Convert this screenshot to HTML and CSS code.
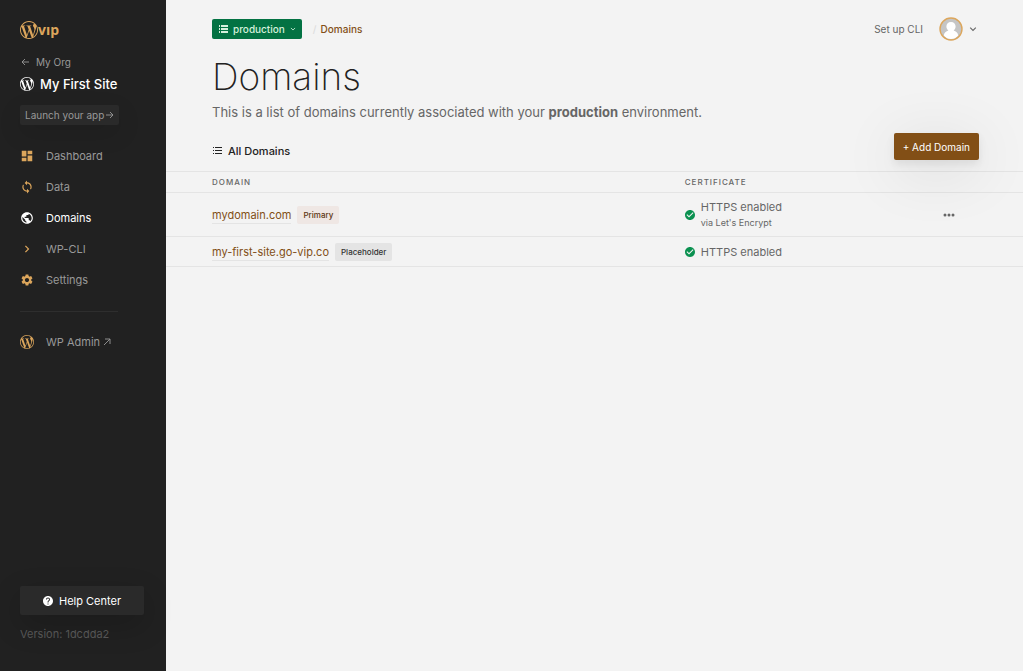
FILE: index.html
```html
<!DOCTYPE html>
<html lang="en">
<head>
    <meta charset="UTF-8">
    <meta name="viewport" content="width=device-width, initial-scale=1.0">
    <title>Domains - My First Site</title>
    <link rel="stylesheet" href="styles.css">
</head>
<body>

    <!-- Shared icon shapes -->
    <svg class="sprite" aria-hidden="true">
        <symbol id="icon-wordpress" viewBox="0 0 24 24">
            <path d="M21.469 6.825c.84 1.537 1.318 3.3 1.318 5.175 0 3.979-2.156 7.456-5.363 9.325l3.295-9.527c.615-1.54.82-2.771.82-3.864 0-.405-.026-.78-.07-1.11m-7.981.105c.647-.03 1.232-.105 1.232-.105.582-.075.514-.93-.067-.899 0 0-1.755.135-2.88.135-1.064 0-2.85-.15-2.85-.15-.585-.03-.661.855-.075.885 0 0 .54.061 1.125.09l1.68 4.605-2.37 7.08L5.354 6.9c.649-.03 1.234-.1 1.234-.1.585-.075.516-.93-.065-.896 0 0-1.746.138-2.874.138-.2 0-.438-.008-.69-.015C4.911 3.15 8.235 1.215 12 1.215c2.809 0 5.365 1.072 7.286 2.833-.046-.003-.091-.009-.141-.009-1.06 0-1.812.923-1.812 1.914 0 .89.513 1.643 1.06 2.531.411.72.89 1.643.89 2.977 0 .915-.354 1.994-.821 3.479l-1.075 3.585-3.9-11.61.001.014zM12 22.784c-1.059 0-2.081-.153-3.048-.437l3.237-9.406 3.315 9.087c.024.053.05.101.078.149-1.12.393-2.325.609-3.582.609M1.211 12c0-1.564.336-3.05.935-4.39L7.29 21.709C3.694 19.96 1.212 16.271 1.211 12M12 0C5.385 0 0 5.385 0 12s5.385 12 12 12 12-5.385 12-12S18.615 0 12 0"/>
        </symbol>
        <symbol id="icon-check" viewBox="2 2 20 20">
            <path d="M12 2C6.48 2 2 6.48 2 12s4.48 10 10 10 10-4.48 10-10S17.52 2 12 2zm-2 15l-5-5 1.41-1.41L10 14.17l7.59-7.59L19 8l-9 9z"/>
        </symbol>
        <symbol id="icon-chevron" viewBox="0 0 8 8">
            <path d="M1.2 2.6L4 5.4l2.800-2.800" fill="none" stroke="currentColor" stroke-width="1.1"/>
        </symbol>
    </svg>

    <div class="layout">
        <aside class="sidebar">
            <a class="logo" href="#" aria-label="WordPress VIP">
                <svg class="icon-large"><use href="#icon-wordpress"/></svg>
                <span>vıp</span>
            </a>

            <a class="org-link" href="#">
                <svg class="icon-tiny" viewBox="0 0 8 8"><path d="M8 4H1M4 1L1 4l3 3" fill="none" stroke="currentColor" stroke-width="0.9"/></svg>
                My Org
            </a>
            <a class="site-name" href="#">
                <svg class="icon-site"><use href="#icon-wordpress"/></svg>
                My First Site
            </a>
            <button class="launch-button" type="button">
                Launch your app
                <svg class="icon-tiny" viewBox="0 0 8 8"><path d="M0 4h7M4 1l3 3-3 3" fill="none" stroke="currentColor" stroke-width="0.9"/></svg>
            </button>

            <nav class="nav">
                <a class="nav-item" href="#">
                    <svg class="nav-icon" viewBox="0 0 24 24"><path d="M3 13h8V3H3v10zm0 8h8v-6H3v6zm10 0h8V11h-8v10zm0-18v6h8V3h-8z"/></svg>
                    Dashboard
                </a>
                <a class="nav-item" href="#">
                    <svg class="nav-icon" viewBox="0 0 24 24"><path d="M12 4V1L8 5l4 4V6c3.310 0 6 2.690 6 6 0 1.010-.25 1.970-.7 2.800l1.460 1.460C19.540 15.030 20 13.570 20 12c0-4.420-3.580-8-8-8zm0 14c-3.310 0-6-2.690-6-6 0-1.010.25-1.970.7-2.800L5.240 7.740C4.460 8.970 4 10.430 4 12c0 4.420 3.580 8 8 8v3l4-4-4-4v3z"/></svg>
                    Data
                </a>
                <a class="nav-item active" href="#">
                    <svg class="nav-icon" viewBox="0 0 24 24"><path d="M12 2C6.480 2 2 6.480 2 12s4.480 10 10 10 10-4.480 10-10S17.520 2 12 2zm-1 17.930c-3.950-.49-7-3.850-7-7.930 0-.62.08-1.210.21-1.790L9 15v1c0 1.100.9 2 2 2v1.930zm6.900-2.540c-.26-.81-1-1.390-1.900-1.390h-1v-3c0-.55-.45-1-1-1H8v-2h2c.55 0 1-.45 1-1V7h2c1.100 0 2-.9 2-2v-.41c2.930 1.190 5 4.060 5 7.410 0 2.080-.8 3.970-2.100 5.390z"/></svg>
                    Domains
                </a>
                <a class="nav-item" href="#">
                    <svg class="nav-icon" viewBox="0 0 24 24"><path d="M8.500 16.600L13.100 12 8.500 7.400 10 6l6 6-6 6z"/></svg>
                    WP-CLI
                </a>
                <a class="nav-item" href="#">
                    <svg class="nav-icon" viewBox="0 0 24 24"><path d="M19.140 12.940c.04-.3.060-.61.060-.94 0-.32-.02-.64-.07-.94l2.030-1.580c.18-.14.23-.41.12-.61l-1.920-3.320c-.12-.22-.37-.29-.59-.22l-2.390.96c-.5-.38-1.030-.7-1.620-.94l-.36-2.540c-.04-.24-.24-.41-.48-.41h-3.840c-.24 0-.43.17-.47.41l-.36 2.540c-.59.24-1.130.57-1.620.94l-2.390-.96c-.22-.08-.47 0-.59.22L2.740 8.870c-.12.21-.08.47.12.61l2.030 1.580c-.05.3-.09.63-.09.94s.02.64.07.94l-2.030 1.580c-.18.14-.23.41-.12.61l1.920 3.320c.12.22.37.29.59.22l2.390-.96c.5.38 1.030.7 1.620.94l.36 2.540c.05.24.24.41.48.41h3.840c.24 0 .44-.17.47-.41l.36-2.540c.59-.24 1.130-.56 1.620-.94l2.390.96c.22.08.47 0 .59-.22l1.920-3.320c.12-.22.07-.47-.12-.61l-2.010-1.580zM12 15.600c-1.980 0-3.600-1.620-3.600-3.600s1.620-3.600 3.600-3.600 3.600 1.620 3.600 3.600-1.620 3.600-3.600 3.600z"/></svg>
                    Settings
                </a>
            </nav>

            <a class="nav-item admin-link" href="#">
                <svg class="nav-icon"><use href="#icon-wordpress"/></svg>
                <span>WP Admin <svg class="icon-tiny" viewBox="0 0 8 8"><path d="M1 7l6-6M2 1h5v5" fill="none" stroke="currentColor" stroke-width="0.9"/></svg></span>
            </a>

            <div class="sidebar-footer">
                <button class="help-button" type="button">
                    <svg class="icon-small" viewBox="2 2 20 20"><path d="M12 2C6.480 2 2 6.480 2 12s4.480 10 10 10 10-4.480 10-10S17.520 2 12 2zm1 17h-2v-2h2v2zm2.070-7.750l-.9.920C13.450 12.900 13 13.500 13 15h-2v-.5c0-1.100.45-2.100 1.170-2.830l1.240-1.260c.37-.36.59-.86.59-1.410 0-1.100-.9-2-2-2s-2 .9-2 2H8c0-2.210 1.790-4 4-4s4 1.790 4 4c0 .88-.36 1.680-.93 2.250z"/></svg>
                    Help Center
                </button>
                <p class="version">Version: 1dcdda2</p>
            </div>
        </aside>

        <main class="main">
            <header class="topbar">
                <button class="env-button" type="button">
                    <svg class="icon-small" viewBox="0 0 10 10"><path d="M1 1h1v2H1zM3 1h7v2H3zM1 4h1v2H1zM3 4h7v2H3zM1 7h1v2H1zM3 7h7v2H3z"/></svg>
                    production
                    <svg class="icon-mini"><use href="#icon-chevron"/></svg>
                </button>
                <nav class="breadcrumb" aria-label="Breadcrumb">
                    <span class="slash">/</span>
                    <a href="#">Domains</a>
                </nav>
                <a class="cli-link" href="#">Set up CLI</a>
                <button class="user-button" type="button" aria-label="Account">
                    <svg class="avatar" viewBox="0 0 24 24">
                        <circle cx="12" cy="12" r="11" fill="#c5c5c5"/>
                        <path d="M12 5c-2.800 0-4.600 2-4.600 4.600 0 1.700.8 3.200 2 4-2.400.7-4.200 2.200-4.600 4.900C6.600 20.900 9.100 22 12 22s5.400-1.100 7.200-3.500c-.4-2.700-2.200-4.200-4.600-4.900 1.200-.8 2-2.300 2-4C16.600 7 14.800 5 12 5z" fill="#fff"/>
                        <circle cx="12" cy="12" r="11" fill="none" stroke="#dca65c" stroke-width="1.400"/>
                    </svg>
                    <svg class="icon-tiny"><use href="#icon-chevron"/></svg>
                </button>
            </header>

            <section class="intro">
                <h1>Domains</h1>
                <p>This is a list of domains currently associated with your <strong>production</strong> environment.</p>
            </section>

            <div class="toolbar">
                <h2>
                    <svg class="icon-small" viewBox="0 0 10 10"><path d="M1 1h1v1H1zM3 1h7v1H3zM1 4h1v1H1zM3 4h7v1H3zM1 7h1v1H1zM3 7h7v1H3z"/></svg>
                    All Domains
                </h2>
                <button class="add-button" type="button">+ Add Domain</button>
            </div>

            <table class="domains">
                <thead>
                    <tr>
                        <th scope="col">Domain</th>
                        <th class="col-certificate" scope="col">Certificate</th>
                        <td class="col-actions"></td>
                    </tr>
                </thead>
                <tbody>
                    <tr>
                        <td>
                            <div class="domain">
                                <a href="#">mydomain.com</a>
                                <span class="tag primary">Primary</span>
                            </div>
                        </td>
                        <td>
                            <div class="certificate">
                                <svg class="icon-small"><use href="#icon-check"/></svg>
                                <div>
                                    HTTPS enabled
                                    <small>via Let's Encrypt</small>
                                </div>
                            </div>
                        </td>
                        <td class="col-actions">
                            <button class="more-button" type="button" aria-label="More actions">
                                <svg viewBox="0 0 12 4"><circle cx="2" cy="2" r="1.500"/><circle cx="6" cy="2" r="1.500"/><circle cx="10" cy="2" r="1.500"/></svg>
                            </button>
                        </td>
                    </tr>
                    <tr>
                        <td>
                            <div class="domain">
                                <a href="#">my-first-site.go-vip.co</a>
                                <span class="tag">Placeholder</span>
                            </div>
                        </td>
                        <td>
                            <div class="certificate">
                                <svg class="icon-small"><use href="#icon-check"/></svg>
                                <div>HTTPS enabled</div>
                            </div>
                        </td>
                        <td class="col-actions"></td>
                    </tr>
                </tbody>
            </table>
        </main>
    </div>

</body>
</html>
```
FILE: styles.css
```css
* {
    box-sizing: border-box;
}

body {
    margin: 0;
    font-family: Inter, "Liberation Sans", sans-serif;
    font-size: 11px;
    line-height: 16px;
    color: #666;
    background-color: #f3f3f3;
}

a {
    color: inherit;
    text-decoration: none;
}

button {
    font: inherit;
    color: inherit;
    border: none;
    background: none;
    padding: 0;
    cursor: pointer;
}

svg {
    fill: currentColor;
    flex-shrink: 0;
}

.sprite {
    display: none;
}

.icon-mini {
    width: 6px;
    height: 6px;
}

.icon-tiny {
    width: 8px;
    height: 8px;
}

.icon-small {
    width: 10px;
    height: 10px;
}

.icon-site {
    width: 14px;
    height: 14px;
}

.icon-large {
    width: 18px;
    height: 18px;
}

.layout {
    display: flex;
    min-height: 100vh;
}

/* Sidebar */
.sidebar {
    display: flex;
    flex-direction: column;
    align-items: flex-start;
    flex: 0 0 166px;
    padding: 20px 22px 29px 20px;
    background-color: #212121;
    color: #999;
}

.logo {
    display: flex;
    align-items: center;
    height: 20px;
    margin-bottom: 14px;
    color: #dca65c;
    font-family: "Open Sans", sans-serif;
    font-size: 14px;
    font-weight: 700;
}

.org-link {
    display: flex;
    align-items: center;
    gap: 7px;
    padding-left: 1px;
    font-size: 10px;
}

.site-name {
    display: flex;
    align-items: center;
    gap: 6px;
    height: 28px;
    color: #fff;
    font-size: 13px;
    font-weight: 500;
    white-space: nowrap;
}

.launch-button {
    display: flex;
    align-items: center;
    gap: 2px;
    height: 20px;
    margin-top: 7px;
    padding: 0 5px;
    border-radius: 2px;
    background-color: #2a2a2a;
    font-size: 10px;
    white-space: nowrap;
    box-shadow: 0 8px 24px rgba(0, 0, 0, 0.12);
}

.nav {
    display: flex;
    flex-direction: column;
    gap: 9px;
    width: 98px;
    margin-top: 20px;
    padding-bottom: 20px;
    border-bottom: 1px solid #2e2e2e;
}

.nav-item {
    display: flex;
    align-items: center;
    gap: 12px;
    height: 22px;
}

.nav-icon {
    width: 14px;
    height: 14px;
    color: #dca65c;
}

.active,
.active .nav-icon {
    color: #fff;
}

.admin-link {
    margin-top: 19px;
}

.sidebar-footer {
    align-self: stretch;
    margin-top: auto;
}

.help-button {
    display: flex;
    align-items: center;
    justify-content: center;
    gap: 6px;
    width: 100%;
    height: 29px;
    border-radius: 2px;
    background-color: #2a2a2a;
    color: #fff;
    box-shadow: 0 10px 30px rgba(0, 0, 0, 0.2);
}

.version {
    margin: 11px 0 0;
    color: #555;
}

/* Main column */
.main {
    flex: 1;
    min-width: 0;
}

.topbar {
    display: flex;
    align-items: center;
    height: 58px;
    padding: 0 46px;
    font-size: 10px;
}

.env-button {
    display: flex;
    align-items: center;
    gap: 5px;
    height: 20px;
    padding: 0 6px;
    border-radius: 2px;
    background-color: #037243;
    color: #d5f0dc;
    font-weight: 500;
}

.breadcrumb {
    display: flex;
    gap: 4px;
    margin-left: 11px;
    color: #824f16;
    font-weight: 500;
}

.slash {
    color: #ddd;
}

.cli-link {
    margin-left: auto;
}

.user-button {
    display: flex;
    align-items: center;
    gap: 6px;
    margin-left: 16px;
}

.avatar {
    width: 24px;
    height: 24px;
}

.intro {
    padding: 0 46px;
}

h1 {
    margin: 0;
    color: #222;
    font-size: 37px;
    font-weight: 200;
    line-height: 38px;
}

.intro p {
    margin: 6px 0 0;
    font-size: 13px;
    line-height: 20px;
}

.toolbar {
    display: flex;
    align-items: flex-start;
    justify-content: space-between;
    padding: 11px 44px 11px 46px;
}

h2 {
    display: flex;
    align-items: center;
    gap: 6px;
    margin: 10px 0 0;
    color: #222;
    font-size: 11px;
    font-weight: 500;
    line-height: 16px;
}

.add-button {
    height: 27px;
    padding: 0 9px;
    border-radius: 2px;
    background-color: #824f16;
    color: #fff;
    font-size: 10px;
    box-shadow: 0 4px 8px rgba(0, 0, 0, 0.08), 0 10px 60px rgba(0, 0, 0, 0.12);
}

/* Domain list */
.domains {
    width: 100%;
    border-collapse: collapse;
    border-top: 1px solid #e4e4e4;
}

.domains tr {
    border-bottom: 1px solid #e4e4e4;
}

.domains th,
.domains td {
    padding: 6px 0 5px;
    text-align: left;
}

.domains thead th,
.domains thead td {
    padding: 2px 0;
    font-size: 8px;
    font-weight: 500;
    letter-spacing: 1px;
    text-transform: uppercase;
}

.domains th:first-child,
.domains td:first-child {
    padding-left: 46px;
}

.col-certificate {
    width: 25%;
}

.domains .col-actions {
    width: 124px;
    padding-left: 44px;
}

.domain {
    display: flex;
    align-items: center;
    gap: 6px;
}

.domain a {
    border-bottom: 1px solid #e4e4e4;
    color: #824f16;
}

.tag {
    padding: 1px 6px;
    border-radius: 2px;
    background-color: #e4e4e4;
    color: #333;
    font-size: 8px;
    font-weight: 500;
}

.primary {
    background-color: #efe7e4;
    color: #5c3510;
}

.certificate {
    display: flex;
    align-items: center;
    gap: 6px;
}

.certificate svg {
    color: #0a9150;
}

.certificate small {
    display: block;
    font-size: 9px;
}

.more-button {
    display: block;
    width: 12px;
    height: 16px;
}

.more-button svg {
    display: block;
    width: 12px;
    height: 4px;
}
```
